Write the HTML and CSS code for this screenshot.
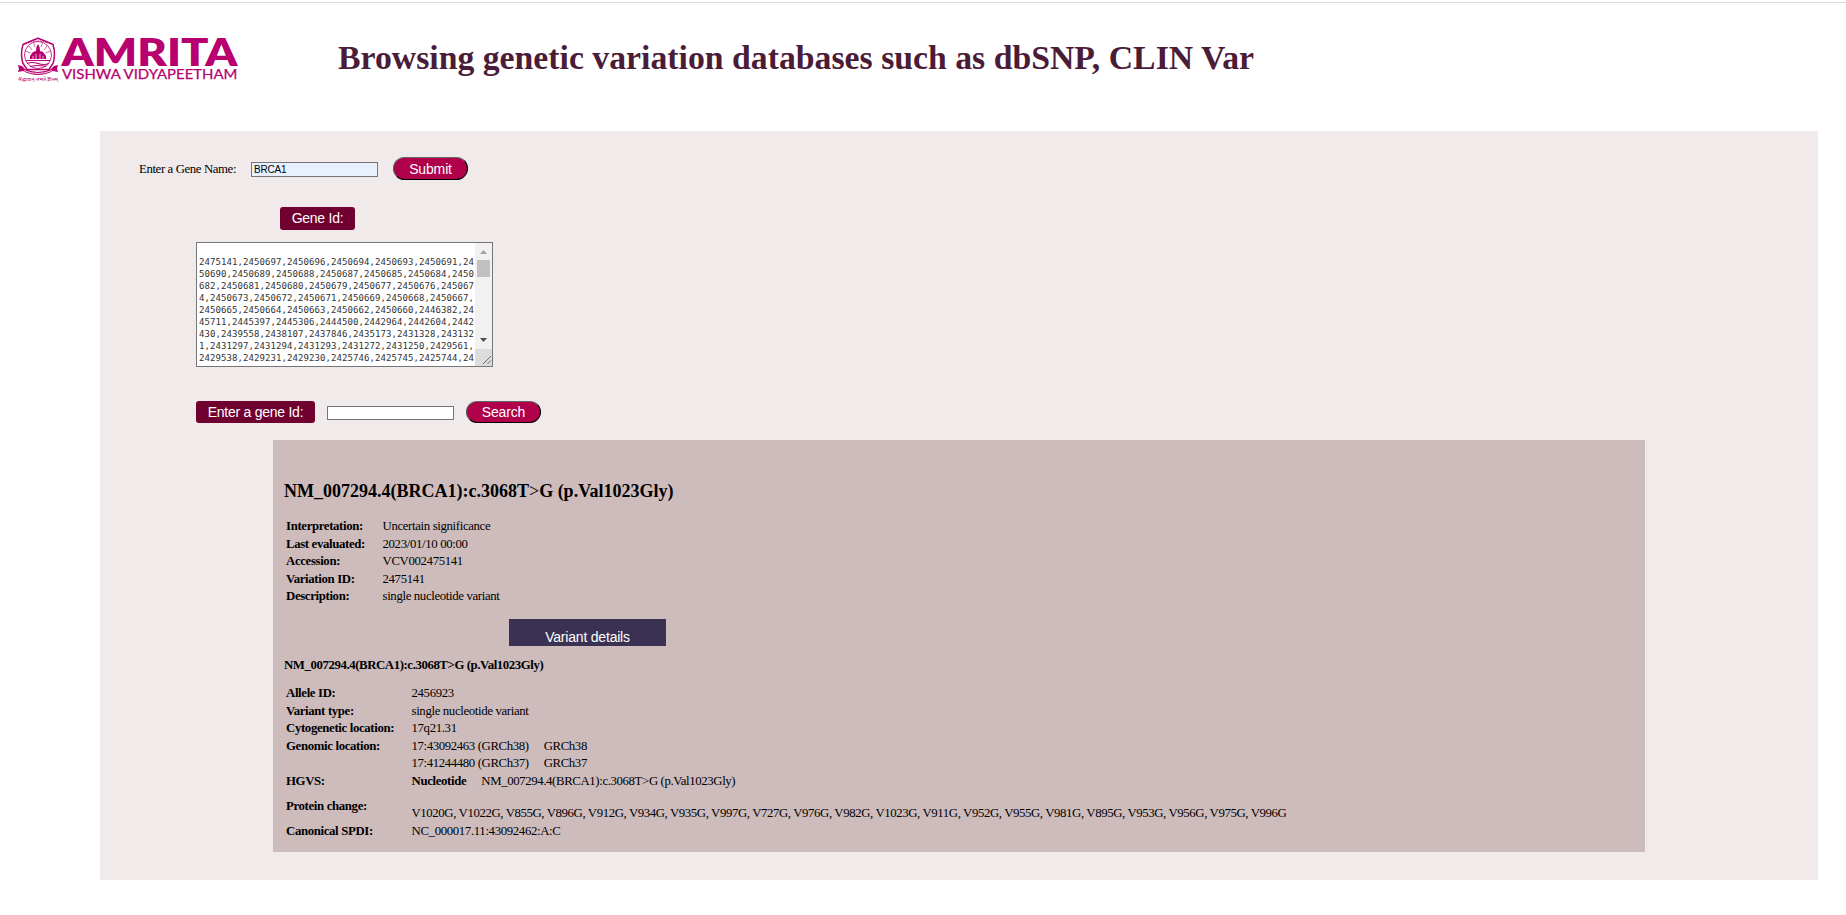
FILE: index.html
```html
<!DOCTYPE html>
<html lang="en">
<head>
<meta charset="utf-8">
<title>Browsing genetic variation databases</title>
<link rel="stylesheet" href="styles.css">
</head>
<body>
<header class="header">
  <svg class="logo" width="224" height="48" viewBox="16 35 224 48" role="img" aria-label="Amrita Vishwa Vidyapeetham">
    <g fill="none" stroke="#b8006e">
      <path d="M38 38.200q8 3 15 6.300 3 10 0 19l-4 6H27l-4-6q-3-9 0-19 7-3.300 15-6.300z" stroke-width="1.500"/>
      <circle cx="38" cy="55" r="13.500" stroke-width=".8"/>
      <path d="M29 46l3 4M25.500 51l5 2M47 46l-3 4M50.500 51l-5 2M33.500 43l1.500 4M42.500 43L41 47" stroke-width=".6"/>
      <path d="M26 60.500h24M27 63.500q5-2 11 0t11 0M30 66.500q8-2 16 0" stroke-width="1.200"/>
      <path d="M28 43q10-4 20 0" stroke-width="1" stroke-dasharray="1.500 1"/>
    </g>
    <path fill="#b8006e" d="M30 59v-3l3-4 3-1 .5-4 1.500-3 1.500 3 .5 4 3 1 3 4v3z"/>
    <path d="M33 56v3M36 54v5M40 54v5M43 56v3" stroke="#fff" stroke-width=".7"/>
    <path fill="#b8006e" d="M18 65l4 1 3 3q13 6 26 0l3-3 4-1-1 4 1 3-5-1q-15 8-30 0l-5 1 1-3z"/>
    <path fill="none" stroke="#fff" stroke-width=".8" d="M24 70.500q14 6 28 0"/>
    <text class="logo-motto" x="18" y="80.500" textLength="40" lengthAdjust="spacingAndGlyphs">श्रद्धावान् लभते ज्ञानम्</text>
    <text class="logo-name" x="61.500" y="66.300" textLength="176" lengthAdjust="spacingAndGlyphs">AMRITA</text>
    <text class="logo-sub" x="62" y="79.300" textLength="175.500" lengthAdjust="spacingAndGlyphs">VISHWA VIDYAPEETHAM</text>
  </svg>
  <h1 class="title">Browsing genetic variation databases such as dbSNP, CLIN Var</h1>
</header>
<main class="panel">
  <form class="row row-name">
    <label class="name-label" for="gene">Enter a Gene Name:</label>
    <input class="field field-filled" id="gene" value="BRCA1">
    <button class="pill" type="button">Submit</button>
  </form>
  <div class="tag tag-id">Gene Id:</div>
  <div class="ids">
    <pre class="ids-text">2475141,2450697,2450696,2450694,2450693,2450691,24
50690,2450689,2450688,2450687,2450685,2450684,2450
682,2450681,2450680,2450679,2450677,2450676,245067
4,2450673,2450672,2450671,2450669,2450668,2450667,
2450665,2450664,2450663,2450662,2450660,2446382,24
45711,2445397,2445306,2444500,2442964,2442604,2442
430,2439558,2438107,2437846,2435173,2431328,243132
1,2431297,2431294,2431293,2431272,2431250,2429561,
2429538,2429231,2429230,2425746,2425745,2425744,24</pre>
    <svg class="bar" width="17" height="123" viewBox="0 0 17 123">
      <path fill="#f1f1f1" d="M0 0h17v106H0z"/>
      <path fill="#dcdcdc" d="M0 106h17v17H0z"/>
      <path fill="#c1c1c1" d="M2 17h13v17H2z"/>
      <path fill="#a3a3a3" d="M5 11l3.500-4 3.500 4z"/>
      <path fill="#505050" d="M5 95h7l-3.500 4z"/>
      <path stroke="#555" stroke-width=".8" d="M8 121l8-8M12.500 121l3.500-3.500"/>
    </svg>
  </div>
  <form class="row row-search">
    <label class="tag tag-enter" for="gid">Enter a gene Id:</label>
    <input class="field" id="gid">
    <button class="pill pill-search" type="button">Search</button>
  </form>
  <section class="result">
    <h2 class="variant">NM_007294.4(BRCA1):c.3068T<span class="gt">&gt;</span>G (p.Val1023Gly)</h2>
    <dl class="facts">
      <dt>Interpretation:</dt><dd>Uncertain significance</dd>
      <dt>Last evaluated:</dt><dd>2023/01/10 00:00</dd>
      <dt>Accession:</dt><dd>VCV002475141</dd>
      <dt>Variation ID:</dt><dd>2475141</dd>
      <dt>Description:</dt><dd>single nucleotide variant</dd>
    </dl>
    <div class="banner">Variant details</div>
    <h3 class="subvariant">NM_007294.4(BRCA1):c.3068T&gt;G (p.Val1023Gly)</h3>
    <dl class="facts details">
      <dt>Allele ID:</dt><dd>2456923</dd>
      <dt>Variant type:</dt><dd>single nucleotide variant</dd>
      <dt>Cytogenetic location:</dt><dd>17q21.31</dd>
      <dt>Genomic location:</dt><dd class="pair"><span>17:43092463 (GRCh38)</span><span>GRCh38</span></dd>
      <dt></dt><dd class="pair"><span>17:41244480 (GRCh37)</span><span>GRCh37</span></dd>
      <dt>HGVS:</dt><dd class="pair"><b>Nucleotide</b><span>NM_007294.4(BRCA1):c.3068T&gt;G (p.Val1023Gly)</span></dd>
      <dt class="protein">Protein change:</dt><dd class="protein-list">V1020G, V1022G, V855G, V896G, V912G, V934G, V935G, V997G, V727G, V976G, V982G, V1023G, V911G, V952G, V955G, V981G, V895G, V953G, V956G, V975G, V996G</dd>
      <dt>Canonical SPDI:</dt><dd>NC_000017.11:43092462:A:C</dd>
    </dl>
  </section>
</main>
</body>
</html>
```

FILE: styles.css
```css
* { box-sizing: border-box; }
body {
  margin: 0;
  background: #fff;
  color: #000;
  font-family: "Liberation Serif", "Times New Roman", serif;
  font-size: 12.8px;
}
.header {
  display: flex;
  height: 131px;
  padding: 33px 0 0 16px;
  border-top: 2px solid transparent;
  background: linear-gradient(#dadada, #dadada) 0 0 / 100% 1px no-repeat;
}
.logo { flex: none; overflow: visible; }
.logo-name, .logo-sub { font-family: Lato, sans-serif; fill: #b8006e; }
.logo-name { font-size: 38.500px; font-weight: 800; }
.logo-sub { font-size: 13.300px; font-weight: 400; stroke: #b8006e; stroke-width: .25px; }
.logo-motto { font-family: "Noto Sans", sans-serif; font-size: 4.500px; fill: #b8006e; }
.title {
  margin: 4px 0 0 98px;
  font-size: 33.750px;
  line-height: 38px;
  white-space: nowrap;
  color: #4b1c37;
}
.panel {
  width: 1718px;
  height: 749px;
  margin-left: 100px;
  padding-top: 26px;
  background: #f0eaea;
}
.row { display: flex; align-items: flex-start; }
.row-name { height: 50px; padding-left: 39px; }
.name-label {
  width: 112px;
  padding-top: 5px;
  line-height: 15px;
  letter-spacing: -.39px;
  white-space: nowrap;
}
.field {
  width: 127px;
  height: 14px;
  margin: 5px 15px 0 0;
  padding: 0 2px;
  border: 1px solid #767676;
  outline: 0;
  background: #fff;
  color: #000;
  font: 10px "Liberation Sans", Arial, sans-serif;
}
.field-filled { height: 15px; background: #e8f0fe; letter-spacing: -.2px; }
.pill {
  width: 75px;
  height: 23px;
  padding: 0;
  border: 1px outset #000;
  border-color: #666 #222 #000 #555;
  border-radius: 12px;
  background: #b0004a;
  color: #fff;
  font: 14px/20px "Liberation Sans", Arial, sans-serif;
  letter-spacing: -.15px;
}
.tag {
  border-radius: 3px;
  background: #70002f;
  color: #fff;
  text-align: center;
  font: 14px/22px "Liberation Sans", Arial, sans-serif;
  letter-spacing: -.25px;
}
.tag-id { width: 75px; height: 23px; margin-left: 180px; }
.ids {
  display: flex;
  justify-content: space-between;
  width: 297px;
  height: 125px;
  margin: 12px 0 34px 96px;
  border: 1px solid #767676;
  background: #fff;
  overflow: hidden;
}
.ids-text {
  margin: 13px 0 0 2px;
  font: 9px/12.050px "DejaVu Sans Mono", monospace;
  letter-spacing: .082px;
  color: #333;
}
.bar { flex: none; }
.row-search { height: 39px; padding-left: 96px; }
.tag-enter { width: 119px; height: 22px; margin-right: 12px; }
.row-search .field { margin-right: 12px; }
.pill-search { height: 22px; }
.result {
  width: 1372px;
  height: 412px;
  margin-left: 173px;
  padding: 40px 0 0 11px;
  background: #cebcbc;
}
.variant { margin: 0 0 16px; font-size: 18px; line-height: 22px; }
.gt { font-weight: normal; }
.facts {
  display: grid;
  grid-template-columns: 96.500px 1fr;
  grid-auto-rows: 17.600px;
  margin: 0 0 0 2px;
  line-height: 17px;
  letter-spacing: -.35px;
  white-space: nowrap;
}
.facts dt { font-weight: bold; }
.facts dd { margin: 0; }
.banner {
  width: 157px;
  height: 27px;
  margin: 13px 0 11px 225px;
  background: #3b3152;
  color: #fff;
  text-align: center;
  font: 14px/36px "Liberation Sans", Arial, sans-serif;
  letter-spacing: -.2px;
}
.subvariant { margin: 0 0 11px; font-size: 12.800px; line-height: 17px; letter-spacing: -.41px; }
.details {
  grid-template-columns: 125.500px 1fr;
  grid-template-rows: repeat(6, 17.600px) 32px 17.600px;
}
.pair { display: flex; gap: 15px; }
.pair span { letter-spacing: -.38px; }
.protein { padding-top: 7px; }
.protein-list { padding-top: 14px; letter-spacing: -.395px; }
```
